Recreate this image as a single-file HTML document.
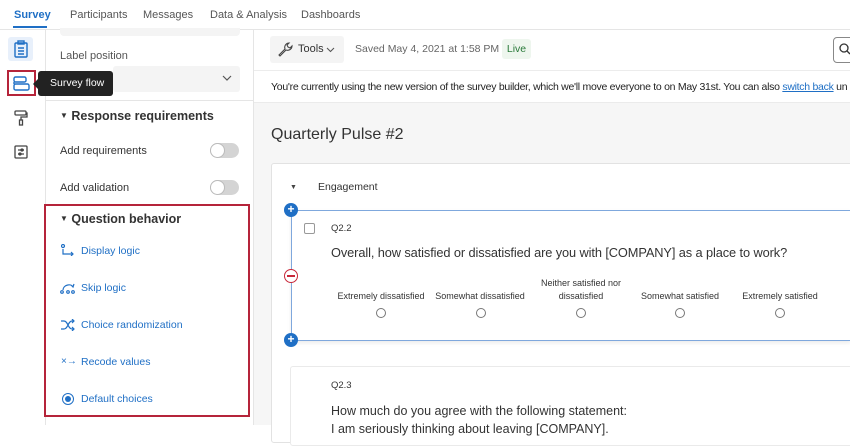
<!DOCTYPE html>
<html><head><style>
*{box-sizing:border-box;margin:0;padding:0}
body{width:850px;height:425px;overflow:hidden;font-family:"Liberation Sans",sans-serif;background:#fff;position:relative;color:#333}
.a{position:absolute}
.nav{left:0;top:0;width:850px;height:30px;border-bottom:1px solid #e5e5e5;font-size:11px;color:#555}
.nav span{position:absolute;top:9px}
.lbl{font-size:11px;color:#333}
.tog{width:29px;height:15px;border-radius:8px;background:#d4d4d4}
.tog:after{content:"";position:absolute;left:0;top:0;width:15px;height:15px;border-radius:50%;background:#fff;border:1px solid #bbb;box-sizing:border-box}
.item{left:81px;font-size:10.5px;color:#1f6fc5}
.rad{width:10px;height:10px;border:1px solid #777;border-radius:50%}
.ch{font-size:9px;color:#333;text-align:center;width:110px}
</style></head><body>
<div class="a nav">
<span style="left:14px;color:#1f6fc5;font-weight:bold">Survey</span>
<div class="a" style="left:13px;top:26px;width:34px;height:2px;background:#1f6fc5"></div>
<span style="left:70px">Participants</span>
<span style="left:143px">Messages</span>
<span style="left:210px">Data &amp; Analysis</span>
<span style="left:301px">Dashboards</span>
</div>
<div class="a" style="left:0;top:30px;width:46px;height:395px;border-right:1px solid #e5e5e5"></div>
<div class="a" style="left:8px;top:37px;width:25px;height:24px;background:#e8f0fb;border-radius:3px"></div>
<svg class="a" style="left:13px;top:40px" width="16" height="18" viewBox="0 0 16 18" fill="none" stroke="#1f6fc5" stroke-width="1.4"><rect x="2" y="3" width="12" height="14" rx="1"/><rect x="5" y="1" width="6" height="3"/><path d="M5 8h6M5 11h6M5 14h6"/></svg>
<div class="a" style="left:7px;top:70px;width:29px;height:26px;border:2px solid #b5243a"></div>
<svg class="a" style="left:13px;top:76px" width="17" height="15" viewBox="0 0 17 15" fill="none" stroke="#1f6fc5" stroke-width="1.4"><rect x="1" y="1" width="12" height="5" rx="1.5"/><rect x="1" y="8" width="15" height="6" rx="1.5"/><path d="M1 6v2"/></svg>
<svg class="a" style="left:14px;top:110px" width="14" height="16" viewBox="0 0 14 16" fill="none" stroke="#444" stroke-width="1.3"><rect x="1" y="1" width="11" height="4" rx="1"/><path d="M12 3h1v4H7v3"/><rect x="5.5" y="10" width="3" height="5"/></svg>
<svg class="a" style="left:14px;top:145px" width="14" height="14" viewBox="0 0 14 14" fill="none" stroke="#444" stroke-width="1.3"><rect x="1" y="1" width="12" height="12" rx="1"/><path d="M4 5h6M4 9h6"/><circle cx="8" cy="5" r="1"/><circle cx="6" cy="9" r="1"/></svg>
<div class="a" style="left:38px;top:71px;width:75px;height:25px;background:#222;border-radius:3px;color:#fff;font-size:10.5px;line-height:25px;padding-left:12px">Survey flow</div>
<div class="a" style="left:33px;top:78px;width:0;height:0;border-top:6px solid transparent;border-bottom:6px solid transparent;border-right:6px solid #222"></div>
<div class="a" style="left:253px;top:30px;width:1px;height:395px;background:#e5e5e5"></div>
<div class="a" style="left:60px;top:28px;width:180px;height:8px;background:#f4f4f4;border-radius:0 0 4px 4px"></div>
<div class="a lbl" style="left:60px;top:50px;color:#555">Label position</div>
<div class="a" style="left:113px;top:66px;width:127px;height:26px;background:#f4f4f4;border-radius:3px"></div>
<svg class="a" style="left:222px;top:75px" width="10" height="7"><path d="M1 1l4 4 4-4" fill="none" stroke="#555" stroke-width="1.2"/></svg>
<div class="a" style="left:46px;top:100px;width:207px;height:1px;background:#e5e5e5"></div>
<div class="a" style="left:60px;top:109px;font-size:12.5px;font-weight:bold;color:#333"><span style="font-size:8px;vertical-align:2px">&#9660;</span> Response requirements</div>
<div class="a lbl" style="left:60px;top:145px">Add requirements</div>
<div class="a tog" style="left:210px;top:143px"></div>
<div class="a lbl" style="left:60px;top:182px">Add validation</div>
<div class="a tog" style="left:210px;top:180px"></div>
<div class="a" style="left:44px;top:204px;width:206px;height:213px;border:2px solid #b5243a"></div>
<div class="a" style="left:60px;top:212px;font-size:12.5px;font-weight:bold;color:#333"><span style="font-size:8px;vertical-align:2px">&#9660;</span> Question behavior</div>
<svg class="a" style="left:61px;top:244px" width="14" height="12" fill="none" stroke="#1f6fc5" stroke-width="1.2"><circle cx="2" cy="2" r="1.5"/><path d="M2 5v5h10M10 8l2 2-2 2"/></svg>
<div class="a item" style="top:245px">Display logic</div>
<svg class="a" style="left:60px;top:281px" width="15" height="13" fill="none" stroke="#1f6fc5" stroke-width="1.2"><path d="M3 9C3 4 11 2 13 6M11 4l2 2 1-3"/><circle cx="2" cy="11" r="1.3"/><circle cx="8" cy="11" r="1.3"/><circle cx="13" cy="11" r="1.3"/></svg>
<div class="a item" style="top:282px">Skip logic</div>
<svg class="a" style="left:60px;top:319px" width="15" height="12" fill="none" stroke="#1f6fc5" stroke-width="1.2"><path d="M1 2h3c4 0 4 8 8 8h2M1 10h3c4 0 4-8 8-8h2M12 0l2 2-2 2M12 8l2 2-2 2"/></svg>
<div class="a item" style="top:319px">Choice randomization</div>
<div class="a" style="left:61px;top:356px;font-size:10px;color:#1f6fc5">×→</div>
<div class="a item" style="top:356px">Recode values</div>
<div class="a" style="left:62px;top:393px;width:12px;height:12px;border:1.3px solid #1f6fc5;border-radius:50%"></div>
<div class="a" style="left:65px;top:396px;width:6px;height:6px;background:#1f6fc5;border-radius:50%"></div>
<div class="a item" style="top:393px">Default choices</div>
<div class="a" style="left:254px;top:70px;width:596px;height:1px;background:#ececec"></div>
<div class="a" style="left:270px;top:36px;width:74px;height:27px;background:#f4f4f4;border-radius:3px"></div>
<svg class="a" style="left:277px;top:42px" width="16" height="15" fill="none" stroke="#444" stroke-width="1.1"><path d="M2 13l6-6c-1-3 1-6 4-6l-2 2 1 2 2 1 2-2c0 3-3 5-6 4l-6 6z"/></svg>
<div class="a" style="left:298px;top:43px;font-size:11px;color:#333">Tools</div>
<svg class="a" style="left:326px;top:47px" width="9" height="6"><path d="M1 1l3.5 3.5L8 1" fill="none" stroke="#555" stroke-width="1.1"/></svg>
<div class="a" style="left:355px;top:43px;font-size:10.5px;color:#666">Saved May 4, 2021 at 1:58 PM</div>
<div class="a" style="left:502px;top:39px;width:29px;height:20px;background:#eef6ee;border-radius:3px;font-size:10.5px;color:#2a7a3a;line-height:20px;text-align:center">Live</div>
<div class="a" style="left:833px;top:37px;width:30px;height:26px;border:1px solid #888;border-radius:4px"></div>
<svg class="a" style="left:839px;top:43px" width="12" height="12" fill="none" stroke="#333" stroke-width="1.3"><circle cx="5" cy="5" r="4"/><path d="M8 8l3 3"/></svg>
<div class="a" style="left:271px;top:81px;font-size:10.5px;letter-spacing:-0.28px;color:#222;white-space:nowrap">You're currently using the new version of the survey builder, which we'll move everyone to on May 31st. You can also <span style="color:#1f6fc5;text-decoration:underline">switch back</span> un</div>
<div class="a" style="left:254px;top:102px;width:596px;height:323px;background:#f6f6f6;border-top:1px solid #ebebeb"></div>
<div class="a" style="left:271px;top:126px;font-size:16px;color:#333">Quarterly Pulse #2</div>
<div class="a" style="left:271px;top:163px;width:590px;height:280px;background:#fff;border:1px solid #e2e2e2;border-radius:3px"></div>
<div class="a" style="left:290px;top:184px;font-size:7px;color:#444">&#9660;</div>
<div class="a" style="left:318px;top:181px;font-size:10.5px;color:#333">Engagement</div>
<div class="a" style="left:291px;top:210px;width:560px;height:131px;border-top:1px solid #7fa8dd;border-bottom:1px solid #7fa8dd;border-left:1px solid #7fa8dd;box-shadow:0 2px 4px rgba(0,0,0,.08);background:#fff"></div>
<div class="a" style="left:284px;top:203px;width:14px;height:14px;border-radius:50%;background:#1f6fc5;color:#fff;font-size:12px;line-height:13px;text-align:center;font-weight:bold">+</div>
<div class="a" style="left:284px;top:333px;width:14px;height:14px;border-radius:50%;background:#1f6fc5;color:#fff;font-size:12px;line-height:13px;text-align:center;font-weight:bold">+</div>
<div class="a" style="left:284px;top:269px;width:14px;height:14px;border-radius:50%;border:1.3px solid #c8283a;background:#fff"></div>
<div class="a" style="left:287px;top:275px;width:8px;height:1.5px;background:#c8283a"></div>
<div class="a" style="left:304px;top:223px;width:11px;height:11px;border:1px solid #999;border-radius:2px"></div>
<div class="a" style="left:331px;top:223px;font-size:9.5px;color:#333">Q2.2</div>
<div class="a" style="left:331px;top:245px;font-size:12.8px;letter-spacing:-0.1px;color:#333">Overall, how satisfied or dissatisfied are you with [COMPANY] as a place to work?</div>
<div class="a ch" style="left:326px;top:291px">Extremely dissatisfied</div>
<div class="a ch" style="left:425px;top:291px">Somewhat dissatisfied</div>
<div class="a ch" style="left:526px;top:277px;line-height:13px">Neither satisfied nor<br>dissatisfied</div>
<div class="a ch" style="left:625px;top:291px">Somewhat satisfied</div>
<div class="a ch" style="left:725px;top:291px">Extremely satisfied</div>
<div class="a rad" style="left:376px;top:308px"></div>
<div class="a rad" style="left:476px;top:308px"></div>
<div class="a rad" style="left:576px;top:308px"></div>
<div class="a rad" style="left:675px;top:308px"></div>
<div class="a rad" style="left:775px;top:308px"></div>
<div class="a" style="left:290px;top:366px;width:570px;height:80px;background:#fff;border:1px solid #eaeaea;border-radius:3px"></div>
<div class="a" style="left:331px;top:380px;font-size:9.5px;color:#333">Q2.3</div>
<div class="a" style="left:331px;top:402px;font-size:12.5px;color:#333;line-height:18px">How much do you agree with the following statement:<br>I am seriously thinking about leaving [COMPANY].</div>
</body></html>
